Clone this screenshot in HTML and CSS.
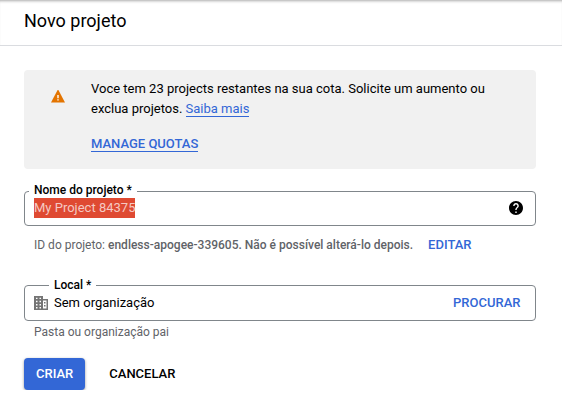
FILE: index.html
```
<!DOCTYPE html>
<html lang="pt-BR">
<head>
<meta charset="utf-8">
<title>Novo projeto</title>
<link rel="stylesheet" href="styles.css">
</head>
<body>
<header class="header"><h1 class="title">Novo projeto</h1></header>
<main class="content">
  <section class="notice">
    <svg class="notice-icon" viewBox="0 0 14 13" width="14" height="13"><path fill="#e37400" d="M6.600 0h.8L14 12.500H0z"/><path fill="#fff" d="M6.300 5h1.400v3.300H6.300zM6.300 9.200h1.400v1.400H6.300z"/></svg>
    <div class="notice-body">
      <p class="notice-text">Voce tem 23 projects restantes na sua cota. Solicite um aumento ou<br>exclua projetos. <a class="link">Saiba mais</a></p>
      <a class="link quotas">MANAGE QUOTAS</a>
    </div>
  </section>
  <div class="field name-field">
    <label class="label name-label">Nome do projeto *</label>
    <span class="selected">My Project 84375</span>
    <svg class="help" viewBox="2 2 20 20" width="14" height="14"><path d="M12 2C6.48 2 2 6.48 2 12s4.48 10 10 10 10-4.48 10-10S17.52 2 12 2zm1 17h-2v-2h2v2zm2.070-7.750l-.9.920C13.450 12.900 13 13.500 13 15h-2v-.5c0-1.100.45-2.100 1.170-2.830l1.240-1.260c.37-.36.59-.86.59-1.410 0-1.100-.9-2-2-2s-2 .9-2 2H8c0-2.210 1.790-4 4-4s4 1.790 4 4c0 .88-.36 1.680-.93 2.250z"/></svg>
  </div>
  <div class="hint id-hint"><span class="id-text">ID do projeto: <b class="strong">endless-apogee-339605. Não é possível alterá-lo depois.</b></span><a class="action edit">EDITAR</a></div>
  <div class="field place-field">
    <label class="label place-label">Local *</label>
    <svg class="building" viewBox="0 0 14 14" width="14" height="14"><path fill="#757575" fill-rule="evenodd" d="M0 0h9v3h5v11H0zM2 1.700v1.300h1.500V1.700zm3.500 0v1.300H7V1.700zM2 4.800v1.400h1.500V4.800zm3.500 0v1.400H7V4.800zM2 8v1.400h1.500V8zm3.500 0v1.400H7V8zM2 11v1.400h1.500V11zm3.500 0v1.400H7V11zM9 4.500h3.500v8H9zM10 6v1.500h1.500V6zm0 3v1.500h1.500V9z"/></svg>
    <span class="place">Sem organização</span>
    <a class="action">PROCURAR</a>
  </div>
  <div class="hint">Pasta ou organização pai</div>
  <div class="buttons">
    <button class="button primary">CRIAR</button>
    <button class="button cancel">CANCELAR</button>
  </div>
</main>
</body>
</html>
```
FILE: styles.css
```
* { box-sizing: border-box; }
body { margin: 0; background: #fff; color: #000; font: 13px/20px Roboto, sans-serif; overflow: hidden; }
.header { height: 46px; padding: 9px 24px 0; border-bottom: 1px solid #dadce0; box-shadow: inset 0 3px 3px -2px #aaa; }
.title { margin: 0; font-size: 18px; line-height: 24px; font-weight: 400; }
.content { padding: 24px 26px 0 24px; }
.notice { display: flex; height: 99px; padding: 9px 27px 0; border-radius: 4px; background: #f1f1f1; }
.notice-icon { margin: 11px 26px 0 0; }
.notice-text { margin: 0 0 15px; white-space: nowrap; }
.link { display: inline-block; color: #3367d6; line-height: 14px; border-bottom: 1px solid #3367d6; }
.quotas { font-weight: 500; }
.field { position: relative; display: flex; align-items: center; border: 1px solid #80868b; border-radius: 4px; }
.name-field { height: 35px; margin-top: 22px; padding: 0 12px 0 9px; }
.label { position: absolute; top: -10px; padding: 0 5px; background: #fff; font-size: 12px; font-weight: 500; line-height: 16px; white-space: nowrap; }
.name-label { left: 4px; }
.place-label { left: 24px; top: -9px; }
.selected { margin-bottom: 2px; background: #df4a32; color: #f5c9c2; line-height: 20px; }
.help { margin-left: auto; }
.name-field .help { margin-bottom: 1px; }
.hint { padding-left: 10px; color: #5f6368; font-size: 12px; line-height: 20px; white-space: nowrap; }
.id-hint { display: flex; align-items: center; margin-top: 9px; }
.strong { font-weight: 500; }
.action { color: #3367d6; font-size: 13px; font-weight: 500; }
.edit { margin-left: 15px; }
.place-field { height: 36px; margin-top: 30px; padding: 0 14.5px 0 9px; }
.building { margin-right: 6px; }
.place { flex: 1; }
.place-field + .hint { margin-top: 1px; }
.buttons { display: flex; gap: 12px; margin-top: 16px; }
.button { height: 32px; padding: 0 12px; border: 0; border-radius: 4px; background: none; color: #000; font: 500 13px/32px Roboto, sans-serif; }
.primary { background: #3367d6; color: #fff; box-shadow: 0 1px 3px rgba(0, 0, 0, .4); }
```
